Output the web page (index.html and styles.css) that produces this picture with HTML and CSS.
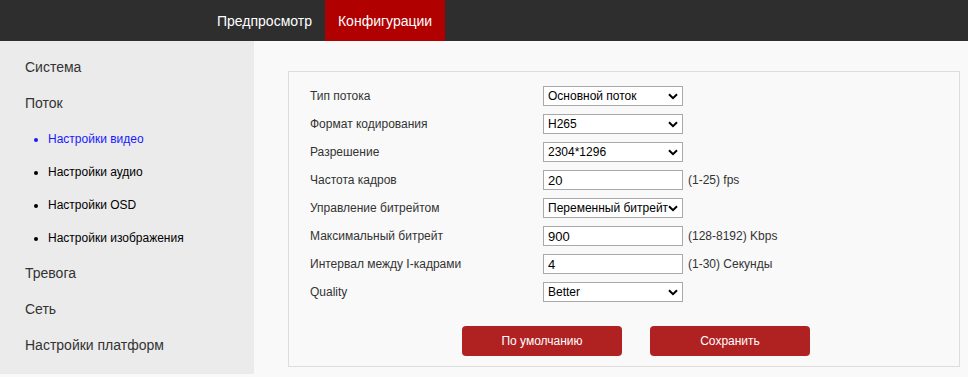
FILE: index.html
```html
<!DOCTYPE html>
<html>
<head>
  <title>Конфигурации - Поток</title>
  <link rel="stylesheet" href="styles.css">
</head>
<body>
  <!-- Top bar -->
  <div class="topbar">
    <a class="tab">Предпросмотр</a>
    <a class="tab active">Конфигурации</a>
  </div>

  <div class="page">
    <!-- Left menu -->
    <div class="sidebar">
      <div class="menu-item">Система</div>
      <div class="menu-item">Поток</div>
      <ul class="submenu">
        <li class="current">Настройки видео</li>
        <li>Настройки аудио</li>
        <li>Настройки OSD</li>
        <li>Настройки изображения</li>
      </ul>
      <div class="menu-item">Тревога</div>
      <div class="menu-item">Сеть</div>
      <div class="menu-item">Настройки платформ</div>
    </div>

    <!-- Video settings -->
    <div class="content">
      <div class="panel">
        <div class="row">
          <label>Тип потока</label>
          <select><option>Основной поток</option></select>
        </div>
        <div class="row">
          <label>Формат кодирования</label>
          <select><option>H265</option></select>
        </div>
        <div class="row">
          <label>Разрешение</label>
          <select><option>2304*1296</option></select>
        </div>
        <div class="row">
          <label>Частота кадров</label>
          <input type="text" value="20">
          <span class="hint">(1-25) fps</span>
        </div>
        <div class="row">
          <label>Управление битрейтом</label>
          <select><option>Переменный битрейт</option></select>
        </div>
        <div class="row">
          <label>Максимальный битрейт</label>
          <input type="text" value="900">
          <span class="hint">(128-8192) Kbps</span>
        </div>
        <div class="row">
          <label>Интервал между I-кадрами</label>
          <input type="text" value="4">
          <span class="hint">(1-30) Секунды</span>
        </div>
        <div class="row">
          <label>Quality</label>
          <select><option>Better</option></select>
        </div>
        <div class="buttons">
          <button>По умолчанию</button>
          <button>Сохранить</button>
        </div>
      </div>
    </div>
  </div>
</body>
</html>
```

FILE: styles.css
```css
body {
  margin: 0;
  font-family: "Liberation Sans", Arial, sans-serif;
  background: #f9f9f9;
  color: #333;
  height: 100vh;
  display: flex;
  flex-direction: column;
  overflow: hidden;
}

.topbar {
  height: 41px;
  background: #2e2e2e;
  display: flex;
  padding-left: 204px;
  flex-shrink: 0;
}

.tab {
  display: flex;
  align-items: center;
  padding: 0 13px;
  color: #fff;
  font-size: 14px;
  cursor: pointer;
}

.tab.active {
  background: #b00000;
}

.page {
  flex: 1;
  display: flex;
}

.sidebar {
  width: 254px;
  background: #ebebeb;
  padding: 8px 0 0 25px;
  box-sizing: border-box;
  margin-bottom: 3px;
}

.menu-item {
  font-size: 14px;
  color: #333;
  height: 36px;
  line-height: 36px;
}

.submenu {
  margin: 0;
  padding: 2px 0 0 23px;
  font-size: 12px;
  color: #000;
}

.submenu li {
  height: 33px;
  line-height: 33px;
}

.submenu li.current {
  color: #1a1aff;
}

.content {
  flex: 1;
  padding: 30px 8px 0 34px;
}

.panel {
  border: 1px solid #ddd;
  padding: 10px 21px 10px;
}

.row {
  height: 28px;
  display: flex;
  align-items: center;
  font-size: 12px;
}

.row label {
  width: 233px;
}

.row select,
.row input {
  width: 140px;
  height: 20px;
  box-sizing: border-box;
  border: 1px solid #a9a9a9;
  background-color: #fff;
  font-family: inherit;
  font-size: 12px;
  color: #000;
  margin: 0;
  padding: 0 4px;
}

.row input {
  font-size: 13px;
  outline: none;
}

.row select {
  appearance: none;
  -webkit-appearance: none;
  border-radius: 0;
  padding-right: 14px;
  background-image: url("data:image/svg+xml,%3Csvg xmlns='http://www.w3.org/2000/svg' width='10' height='7' viewBox='0 0 10 7'%3E%3Cpath d='M1 1.2 L5 5.2 L9 1.2' fill='none' stroke='%23000' stroke-width='2'/%3E%3C/svg%3E");
  background-repeat: no-repeat;
  background-position: right 4px center;
}

.hint {
  margin-left: 5px;
}

.buttons {
  display: flex;
  gap: 28px;
  padding-left: 152px;
  margin-top: 20px;
}

.buttons button {
  width: 160px;
  height: 30px;
  border: none;
  border-radius: 4px;
  background: #b02222;
  color: #fff;
  font-family: inherit;
  font-size: 12px;
  cursor: pointer;
}
```
